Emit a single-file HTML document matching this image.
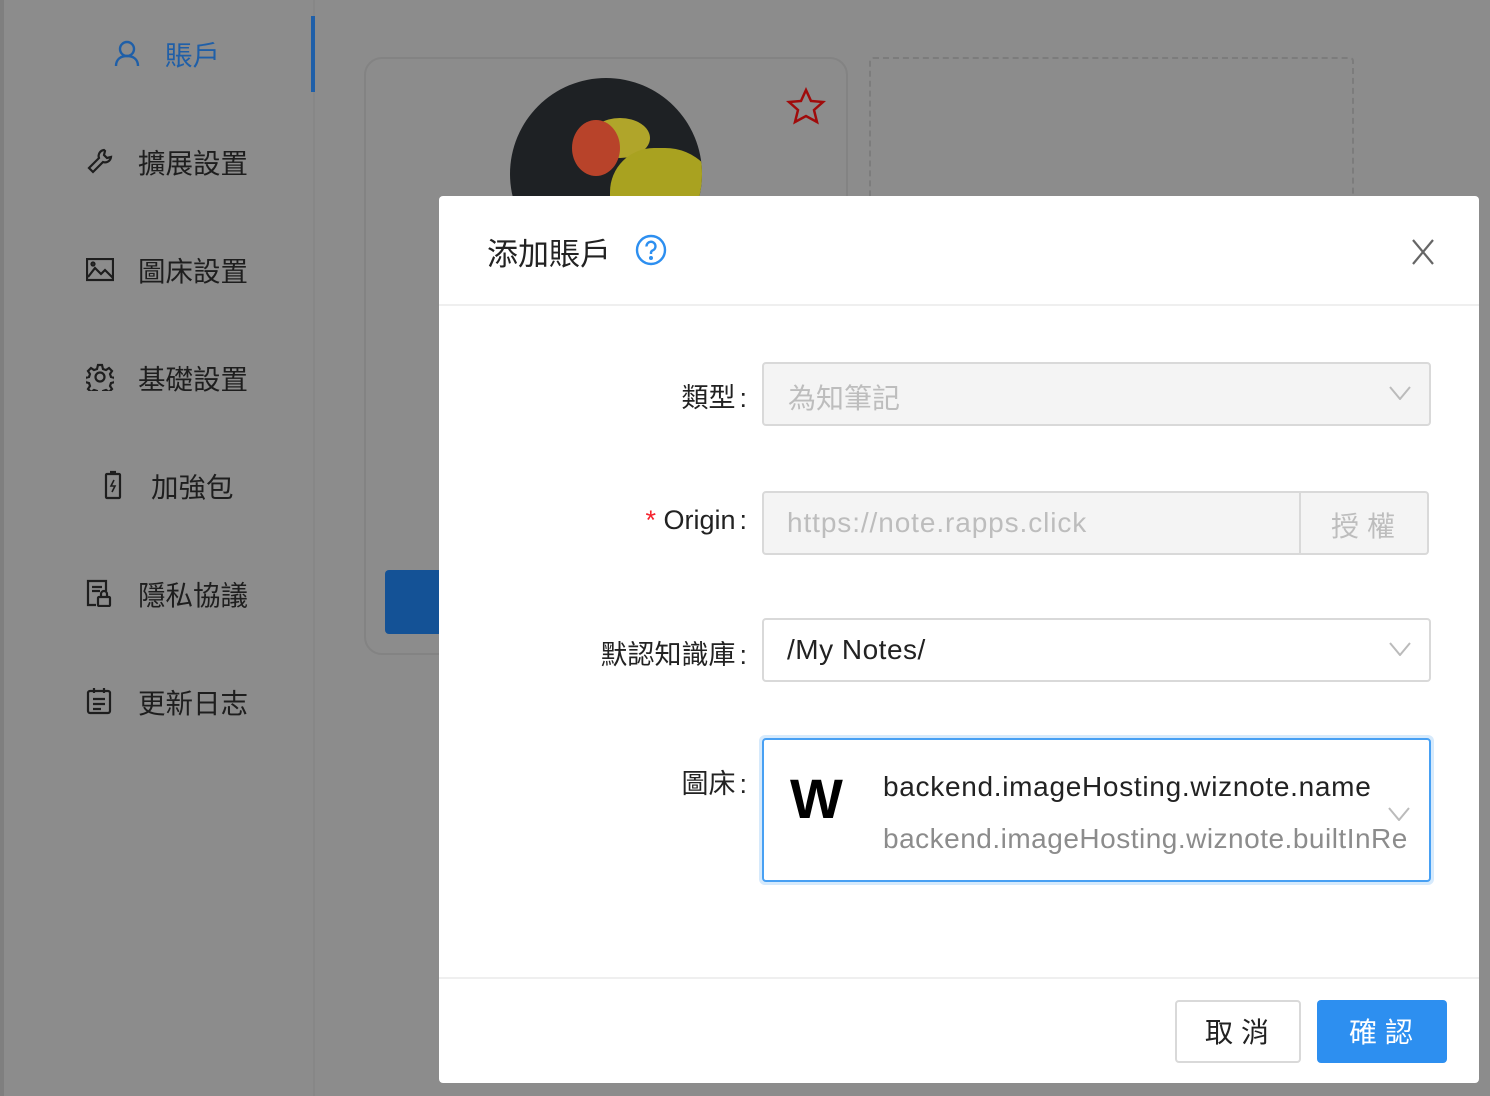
<!DOCTYPE html>
<html><head><meta charset="utf-8"><style>
*{box-sizing:border-box;margin:0;padding:0}
body{width:1490px;height:1096px;position:relative;overflow:hidden;background:#8c8c8c;font-family:"Liberation Sans","Noto Sans CJK TC",sans-serif;color:#1a1a1a}
.abs{position:absolute}
.nav{position:absolute;font-size:27.5px;color:#1e1e1e;display:flex;align-items:center;height:40px}
.nav svg{position:absolute}
.lbl{position:absolute;font-size:27px;color:#222;text-align:right;width:300px;left:447px;white-space:nowrap}
.lbl i{font-style:normal;margin-left:4px}
.box{position:absolute;border:2px solid #d9d9d9;border-radius:4px;font-size:28px}
.chev{position:absolute;right:18px;top:22px}
</style></head><body>
<div class="abs" style="left:0;top:0;width:4px;height:1096px;background:#7f7f7f"></div>
<div class="abs" style="left:313px;top:0;width:2px;height:1096px;background:#878787"></div>
<div class="abs" style="left:311px;top:16px;width:4px;height:76px;background:#1f5fa8"></div>

<div class="nav" style="left:113px;top:33px;color:#1f5fa8">
<svg width="28" height="28" viewBox="0 0 28 28" style="left:0;top:6px" fill="none" stroke="#1f5fa8" stroke-width="2.4"><circle cx="14" cy="10" r="7"/><path d="M3 27c0-7 5-10 11-10s11 3 11 10"/></svg>
<span style="margin-left:52px">賬戶</span></div>
<div class="nav" style="left:86px;top:141px">
<svg width="28" height="28" viewBox="0 0 28 28" style="left:0;top:6px" fill="none" stroke="#1e1e1e" stroke-width="2.2"><path d="M18 3a6 6 0 0 0-5 8L3 21l4 4 10-10a6 6 0 0 0 8-5l-4 1-3-3 1-4z"/></svg>
<span style="margin-left:52px">擴展設置</span></div>
<div class="nav" style="left:86px;top:249px">
<svg width="28" height="24" viewBox="0 0 28 24" style="left:0;top:9px" fill="none" stroke="#1e1e1e" stroke-width="2.2"><rect x="1" y="1" width="26" height="21"/><path d="M2 19l7-9 6 6 4-4 8 8"/><circle cx="7" cy="6" r="1.5"/></svg>
<span style="margin-left:52px">圖床設置</span></div>
<div class="nav" style="left:86px;top:357px">
<svg width="28" height="28" viewBox="0 0 28 28" style="left:0;top:6px" fill="none" stroke="#1e1e1e" stroke-width="2.2"><circle cx="14" cy="14" r="4.5"/><path d="M12 2h4l1 4 3 1 3-2 3 3-2 3 1 3 4 1v4l-4 1-1 3 2 3-3 3-3-2-3 1-1 4h-4l-1-4-3-1-3 2-3-3 2-3-1-3-4-1v-4l4-1 1-3-2-3 3-3 3 2 3-1z"/></svg>
<span style="margin-left:52px">基礎設置</span></div>
<div class="nav" style="left:104px;top:465px">
<svg width="18" height="30" viewBox="0 0 18 30" style="left:0;top:5px" fill="none" stroke="#1e1e1e" stroke-width="2.2"><rect x="2" y="4" width="14" height="24" rx="1"/><path d="M6 2h6"/><path d="M10 10l-3 6h4l-3 6" stroke-width="1.6"/></svg>
<span style="margin-left:47px">加強包</span></div>
<div class="nav" style="left:86px;top:573px">
<svg width="26" height="28" viewBox="0 0 26 28" style="left:0;top:6px" fill="none" stroke="#1e1e1e" stroke-width="2.2"><path d="M10 26H2V2h18v10"/><path d="M6 8h10M6 12h8"/><rect x="12" y="18" width="12" height="9" rx="1"/><path d="M15 18v-3a3 3 0 0 1 6 0v3"/></svg>
<span style="margin-left:52px">隱私協議</span></div>
<div class="nav" style="left:86px;top:681px">
<svg width="26" height="28" viewBox="0 0 26 28" style="left:0;top:6px" fill="none" stroke="#1e1e1e" stroke-width="2.2"><rect x="2" y="4" width="22" height="22" rx="2"/><path d="M8 1v5M18 1v5M7 12h12M7 17h12M7 22h8"/></svg>
<span style="margin-left:52px">更新日志</span></div>

<div class="abs" style="left:364px;top:57px;width:484px;height:598px;border:2px solid #838383;border-radius:18px"></div>
<div class="abs" style="left:869px;top:57px;width:485px;height:200px;border:2px dashed #7c7c7c;border-radius:4px"></div>
<div class="abs" style="left:510px;top:78px;width:192px;height:192px;border-radius:50%;background:#1e2124;overflow:hidden">
<div class="abs" style="left:80px;top:40px;width:60px;height:40px;border-radius:50%;background:#b0a52a"></div>
<div class="abs" style="left:100px;top:70px;width:110px;height:110px;border-radius:40% 50% 0 0;background:#a9a220"></div>
<div class="abs" style="left:62px;top:42px;width:48px;height:56px;border-radius:50%;background:#b8432a"></div>
</div>
<svg class="abs" style="left:786px;top:87px" width="40" height="38" viewBox="0 0 40 38" fill="none" stroke="#a00b0b" stroke-width="2.5"><path d="M20 3l5 11 12 1-9 8 3 12-11-6-11 6 3-12-9-8 12-1z"/></svg>
<div class="abs" style="left:385px;top:570px;width:60px;height:64px;background:#145296;border-radius:4px"></div>

<div class="abs" style="left:439px;top:196px;width:1040px;height:887px;background:#fff;border-radius:4px">
<div class="abs" style="left:0;top:108px;width:1040px;height:2px;background:#efefef"></div>
<div class="abs" style="left:0;top:781px;width:1040px;height:2px;background:#efefef"></div>
<div class="abs" style="left:48px;top:33px;font-size:31px;color:#222">添加賬戶</div>
<svg class="abs" style="left:196px;top:38px" width="32" height="32" viewBox="0 0 32 32" fill="none" stroke="#2d8ff0" stroke-width="2.4"><circle cx="16" cy="16" r="14"/><path d="M11.5 12.5a4.5 4.5 0 1 1 6 4c-1.2.5-1.5 1.3-1.5 2.5v1" /><circle cx="16" cy="24" r="0.8" fill="#2d8ff0"/></svg>
<svg class="abs" style="left:972px;top:43px" width="24" height="26" viewBox="0 0 24 26" stroke="#666" stroke-width="2.2"><path d="M2 1l20 24M22 1L2 25"/></svg>
<div class="abs" style="left:736px;top:804px;width:126px;height:63px;border:2px solid #d9d9d9;border-radius:4px;font-size:28px;color:#222;text-align:center;line-height:61px;letter-spacing:8px;padding-left:6px">取消</div>
<div class="abs" style="left:878px;top:804px;width:130px;height:63px;background:#2d8ff0;border-radius:4px;font-size:28px;color:#fff;text-align:center;line-height:65px;letter-spacing:8px;padding-left:6px">確認</div>
</div>

<div class="lbl" style="top:376px">類型<i>:</i></div>
<div class="box" style="left:762px;top:362px;width:669px;height:64px;background:#f4f4f4;color:#bdbdbd;padding:13px 24px">為知筆記
<svg class="chev" width="22" height="14" viewBox="0 0 22 14" fill="none" stroke="#bbb" stroke-width="2"><path d="M1 1l10 12 10-12"/></svg></div>

<div class="lbl" style="top:505px"><span style="color:#f5222d">*</span> Origin<i>:</i></div>
<div class="box" style="left:762px;top:491px;width:667px;height:64px;background:#f4f4f4;color:#bdbdbd;padding:14px 23px;letter-spacing:0.9px">https://note.rapps.click</div>
<div class="abs" style="left:1299px;top:493px;width:2px;height:60px;background:#d9d9d9"></div>
<div class="abs" style="left:1301px;top:505px;width:126px;text-align:center;font-size:28px;color:#bdbdbd;letter-spacing:8px;padding-left:6px">授權</div>

<div class="lbl" style="top:633px">默認知識庫<i>:</i></div>
<div class="box" style="left:762px;top:618px;width:669px;height:64px;color:#222;padding:14px 23px;letter-spacing:0.5px">/My Notes/
<svg class="chev" width="22" height="14" viewBox="0 0 22 14" fill="none" stroke="#bbb" stroke-width="2"><path d="M1 1l10 12 10-12"/></svg></div>

<div class="lbl" style="top:762px">圖床<i>:</i></div>
<div class="abs" style="left:759px;top:735px;width:675px;height:150px;border-radius:6px;background:#d6eafc"></div>
<div class="box" style="left:762px;top:738px;width:669px;height:144px;background:#fff;border-color:#48a0f3">
<div class="abs" style="left:26px;top:26px;font-size:56px;font-weight:bold;color:#000">W</div>
<div class="abs" style="left:119px;top:31px;font-size:28px;color:#222;letter-spacing:0.7px">backend.imageHosting.wiznote.name</div>
<div class="abs" style="left:119px;top:83px;font-size:28px;color:#8c8c8c;white-space:nowrap;width:525px;overflow:hidden;letter-spacing:0.5px">backend.imageHosting.wiznote.builtInRe</div>
<svg class="abs" style="left:624px;top:67px" width="22" height="14" viewBox="0 0 22 14" fill="none" stroke="#bbb" stroke-width="2"><path d="M1 1l10 12 10-12"/></svg>
</div>
</body></html>
